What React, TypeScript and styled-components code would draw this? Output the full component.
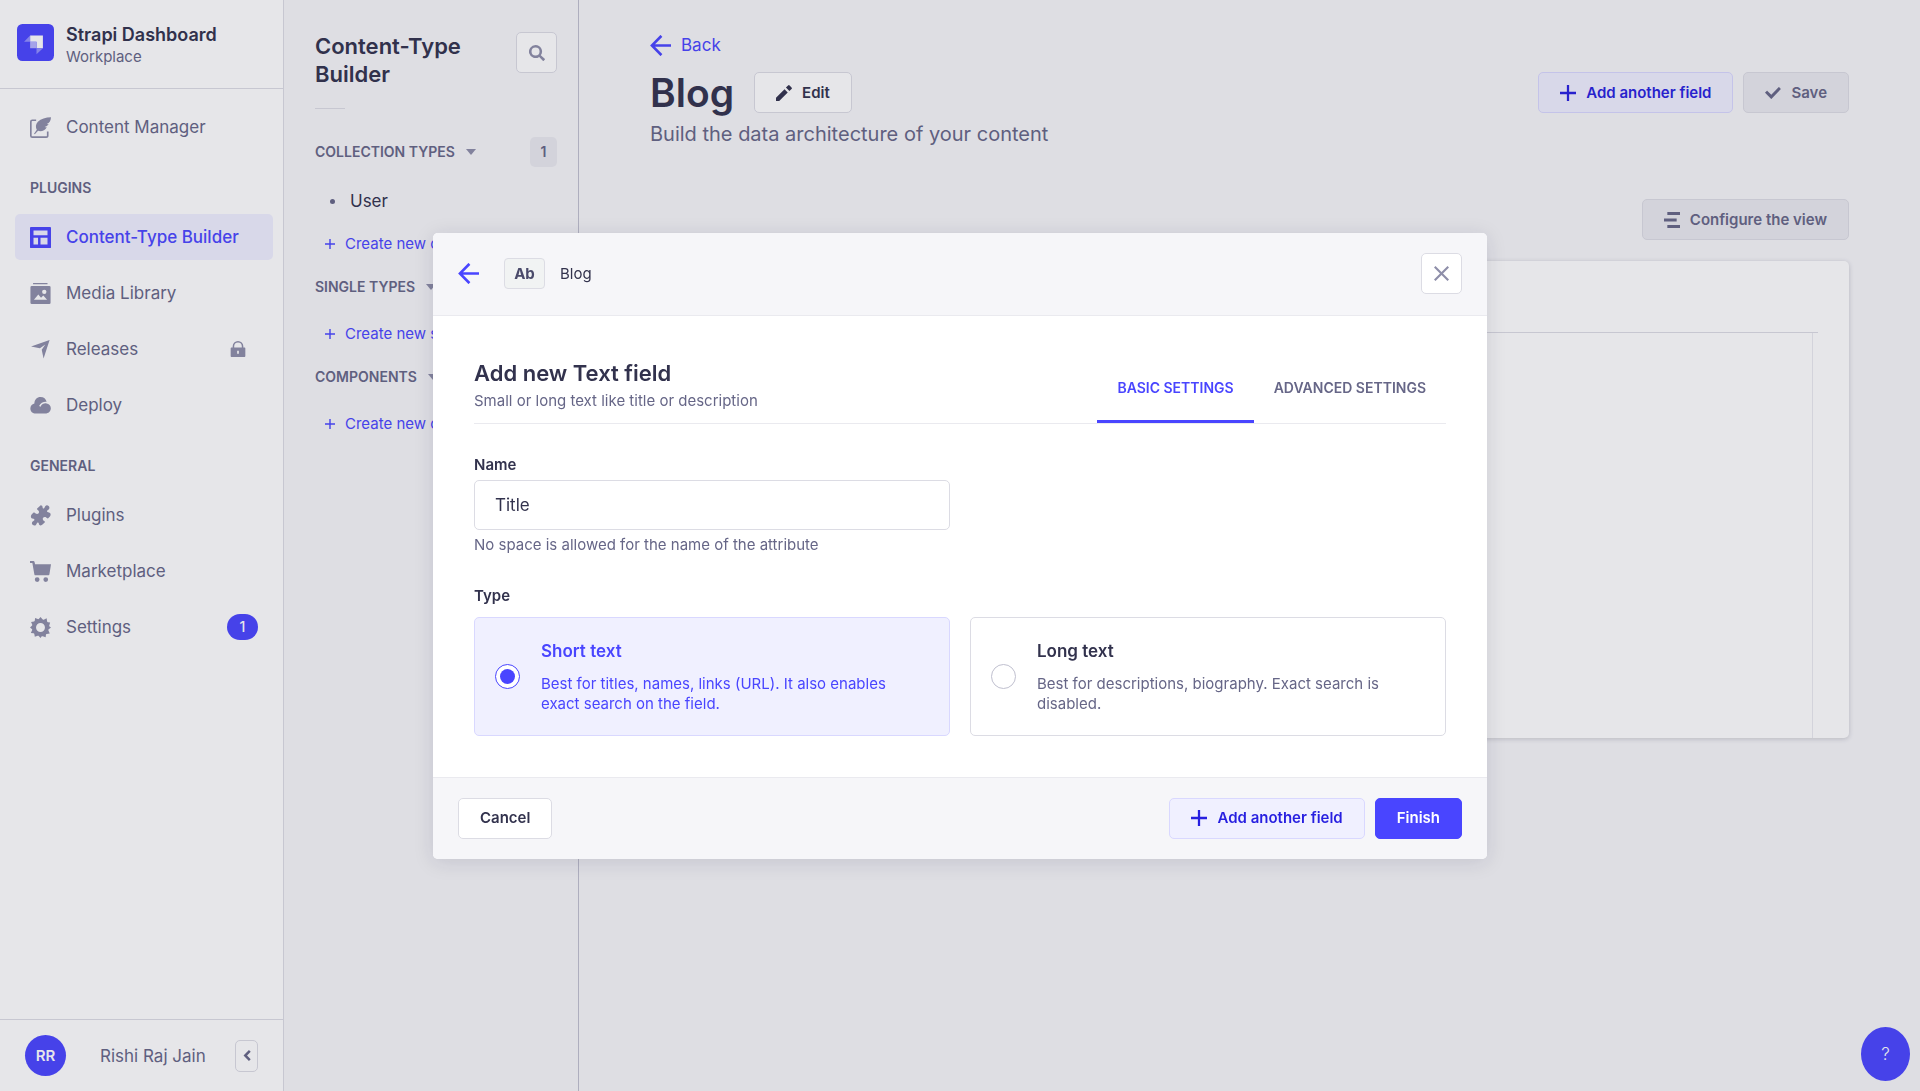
import React, { useState } from 'react';
import styled, { createGlobalStyle, css, ThemeProvider } from 'styled-components';

const theme = {
  n0: '#ffffff',
  n100: '#f6f6f9',
  n150: '#eaeaef',
  n200: '#dcdce4',
  n300: '#c0c0cf',
  n500: '#8e8ea9',
  n600: '#666687',
  n700: '#4a4a6a',
  n800: '#32324d',
  p100: '#f0f0ff',
  p200: '#d9d8ff',
  p600: '#4945ff',
  p700: '#271fe0',
};

const GlobalStyle = createGlobalStyle`
  *, *::before, *::after { box-sizing: border-box; }
  body {
    margin: 0;
    background: ${theme.n100};
    color: ${theme.n800};
    font-family: Inter, "Liberation Sans", sans-serif;
    font-size: 17px;
    line-height: 24px;
    -webkit-font-smoothing: antialiased;
  }
  h1, h2, p, ul, fieldset { margin: 0; padding: 0; border: 0; }
  ul { list-style: none; }
  a { color: inherit; text-decoration: none; }
  button, input { font: inherit; color: inherit; margin: 0; }
  button { cursor: pointer; }
  svg { display: block; flex: none; }
`;

/* ---------- icons ---------- */

type IconProps = { size?: number };
const glyph = (d: string) => ({ size = 16 }: IconProps) => (
  <svg width={size} height={size} viewBox="0 0 24 24" fill="currentColor" fillRule="evenodd" aria-hidden="true">
    <path d={d} />
  </svg>
);

const ArrowLeft = glyph('M24 13.3a.2.2 0 01-.2.2H5.74l8.239 8.239a.2.2 0 010 .282L12.14 23.86a.2.2 0 01-.282 0L.14 12.14a.2.2 0 010-.282L11.86.14a.2.2 0 01.282 0L13.98 1.98a.2.2 0 010 .282L5.74 10.5H23.8c.11 0 .2.09.2.2v2.6z');
const Plus = glyph('M24 13.7H13.700V24h-3.400V13.700H0v-3.400h10.300V0h3.400v10.300H24z');
const Check = glyph('M20.727 2.97a.2.2 0 01.286 0l2.85 2.89a.2.2 0 010 .28L9.554 20.854a.2.2 0 01-.285 0l-9.13-9.243a.2.2 0 010-.281l2.85-2.892a.2.2 0 01.284 0l6.14 6.209L20.726 2.97z');
const Cross = glyph('M24 2.400L21.600 0 12 9.600 2.400 0 0 2.400 9.600 12 0 21.600 2.400 24 12 14.400 21.600 24l2.400-2.400L14.400 12z');
const Pencil = glyph('M0 19.2V24h4.8L17.6 11.2l-4.8-4.8zM23.3 3.6L20.4.7a1.6 1.6 0 00-2.3 0l-3.2 3.2 5.2 5.2 3.2-3.2a1.6 1.6 0 000-2.3z');
const Lines = glyph('M5 0h19v4.4H5zM0 9.8h19v4.4H0zM5 19.6h19V24H5z');
const Search = glyph('M9.8 0a9.8 9.8 0 017.9 15.5l5.9 5.3a1 1 0 010 1.4l-1.5 1.5a1 1 0 01-1.4 0l-5.400-5.800A9.8 9.8 0 119.8 0zm0 3.800a6 6 0 100 12 6 6 0 000-12z');
const Feather = glyph('M24 .2c-6 .1-11.500 1.600-15 5.300C6.200 8.500 6.300 12 7.800 14.700L4.600 19l.9.6 3.700-3.800c3.700 1.200 8-.4 10-4.100-1 .1-1.700 0-2.500-.3 2-.4 3.600-1.500 4.600-3.400-.8.2-1.500.2-2.200 0C22.500 6.500 23.800 4 24 .2zM7 2.800v1.900H2.600c-.4 0-.7.3-.7.7v16c0 .4.3.7.7.7h16c.4 0 .7-.3.7-.7v-4.800h1.900v4.800c0 1.500-1.100 2.600-2.600 2.600h-16A2.600 2.600 0 010 21.400v-16a2.600 2.600 0 012.600-2.600z');
const Layout = glyph('M1 0h22a1 1 0 011 1v22a1 1 0 01-1 1H1a1 1 0 01-1-1V1a1 1 0 011-1zm3 4v5.500h16V4zm0 8.200V20h5.200v-7.800zm8 0V20h8v-7.800z');
const Gallery = glyph('M3.500 0h16.500v1.400H3.500zM2 3.400h20a1.500 1.500 0 011.500 1.500v17.600A1.500 1.500 0 0122 24H2a1.500 1.500 0 01-1.500-1.500V4.900A1.500 1.500 0 012 3.400zm2.500 15.800h15l-4.300-5-2.600 2.600-3.100-3.600zM16.300 7.600a2.500 2.500 0 100 5 2.500 2.500 0 000-5z');
const Plane = glyph('M22.400 1.200L15.500 22.200 13.400 12.300 17.500 6.200 11.300 10.500 1.200 8.600z');
const Cloud = glyph('M12 2.300c3.700 0 6.400 2.300 7 5.500-3.700-.3-7.200 1.400-8.600 4.900l1.700.7c1.300-3 4-4.100 6.700-3.800 2.900.3 5 2.600 5 5.600 0 3.500-2.700 6-6.300 6H6.700C3 21.200.4 18.800.4 15.400c0-2.800 1.800-5 4.600-5.700C5.200 5.100 8 2.300 12 2.300z');
const Puzzle = glyph('M12.200.4c1.400 0 2.300 1.100 2.200 2.500 0 .8.600 1.300 1.400 1 .9-.3.900-1.600 1.600-2.500 1-1.300 2.700-1.300 3.900-.3 1.200 1.100 1.200 2.800 0 3.900-.8.700-1.800 1-1.900 1.900 0 .8.500 1.300 1.300 1.300 1.600 0 2.900 1.100 2.900 2.600 0 1-.4 1.900-1.100 2.600l-1.700 1.700c-.8.800-1.500-.4-2.600-1.100-1.100-.6-2.500-.4-3.200.6-.8 1.200-.4 2.500.7 3.300 1 .7 1.800 1.100 1.100 2l-2.200 2.200c-.8.800-1.500 1.200-2.400 1.200-1.400 0-2.200-1-2.200-2.400 0-.8-.7-1.200-1.400-.9-.9.400-.9 1.700-1.600 2.500-1 1.200-2.700 1.300-3.900.2-1.200-1.100-1.200-2.700-.1-3.900.7-.8 1.900-.9 2-1.800.1-.8-.5-1.300-1.300-1.300-1.500 0-2.700-1.100-2.700-2.600 0-.9.400-1.700 1.100-2.400l2-2c.9-.8 1.500.4 2.500 1.100 1.100.7 2.500.5 3.300-.5.800-1.100.4-2.500-.7-3.300-1-.7-1.700-1.200-1-2z');
const Cart = glyph('M0 0h3.900c.7 0 1.100.4 1.300 1l.6 2.800H24l-1.800 11.400c-.1.700-.7 1.200-1.400 1.200H6.400c-.7 0-1.200-.4-1.400-1.100L2.700 2.200H0zM8.200 18.500a2.700 2.700 0 110 5.400 2.700 2.700 0 010-5.400zm9.800 0a2.700 2.700 0 110 5.400 2.700 2.700 0 010-5.400z');
const Cog = glyph('M12 0l2.300 2.700c.4.500.8.600 1.400.3L19 1.500l.6 3.500c.1.600.4.900 1 .9l2.400.3-1 3.400c-.2.600-.1 1 .4 1.300L24 12l-2.600 2.100c-.5.400-.6.800-.3 1.400l1.500 3.300-3.500.6c-.6.100-.9.400-.9 1l-.3 2.600-3.400-1c-.6-.2-1-.1-1.300.4L12 24l-1.800-2.100c-.4-.5-.8-.6-1.400-.4l-3.300 1.100-.5-3c-.1-.6-.4-.9-1-.9L1 18.400l1.400-3.300c.3-.6.200-1-.3-1.400L0 12l2.100-1.900c.5-.4.6-.8.4-1.400L1.200 5.600 4.600 5c.6-.1.900-.4.9-1l.3-2.800L8.900 2.400c.6.200 1 .1 1.400-.4zm0 6.900a5.100 5.100 0 100 10.200 5.100 5.100 0 000-10.200z');
const Lock = glyph('M12 0a8 8 0 018 8v1.800h1.500c.8 0 1.500.7 1.500 1.500v11.200c0 .8-.7 1.500-1.500 1.500h-19c-.8 0-1.500-.7-1.500-1.500V11.300c0-.8.700-1.500 1.500-1.500H4V8a8 8 0 018-8zm0 2.300A5.700 5.700 0 006.300 8v1.800h11.400V8A5.700 5.700 0 0012 2.300zm-1.300 12.200v4.600h2.600v-4.600z');
const ChevronLeft = glyph('M16.500 2l3.300 3.300L13 12l6.800 6.700-3.300 3.300-10-10z');

const Caret = () => (
  <svg width="10" height="6" viewBox="0 0 10 6" fill="currentColor" aria-hidden="true">
    <path d="M0 0h10L5 6z" />
  </svg>
);

const Logo = () => (
  <svg width="37" height="37" viewBox="0 0 110 110" aria-hidden="true">
    <rect width="110" height="110" rx="16" fill="#4945ff" />
    <path d="M39 34h38v38H58V53H39z" fill="#fff" />
    <path d="M39 53h19v19H39z" fill="#b5b3ff" />
    <path d="M21 53l18-19v19zM58 72h19L58 90z" fill="#918fff" />
  </svg>
);

/* ---------- shared parts ---------- */

const Shell = styled.div`
  display: flex;
  min-height: 100vh;
`;

type Variant = 'default' | 'secondary' | 'tertiary';
const variants = {
  default: css`background: ${theme.p600}; border-color: ${theme.p600}; color: ${theme.n0};`,
  secondary: css`background: ${theme.p100}; border-color: ${theme.p200}; color: ${theme.p700};`,
  tertiary: css`background: ${theme.n0}; border-color: ${theme.n200}; color: ${theme.n800};`,
};

const Button = styled.button<{ $variant?: Variant }>`
  display: inline-flex;
  align-items: center;
  gap: 10px;
  height: 41px;
  padding: 0 21px;
  border: 1px solid;
  border-radius: 5px;
  font-size: 15px;
  font-weight: 600;
  line-height: 20px;
  white-space: nowrap;
  ${({ $variant = 'tertiary' }) => variants[$variant]}
  &:disabled {
    background: ${theme.n150};
    border-color: ${theme.n200};
    color: ${theme.n600};
    cursor: default;
  }
`;

const IconButton = styled.button`
  display: grid;
  place-items: center;
  flex: none;
  width: 41px;
  height: 41px;
  padding: 0;
  border: 1px solid ${theme.n200};
  border-radius: 5px;
  background: ${theme.n0};
  color: ${theme.n500};
`;

/* ---------- main navigation ---------- */

const Sidebar = styled.nav`
  position: sticky;
  top: 0;
  display: flex;
  flex-direction: column;
  flex: none;
  width: 284px;
  height: 100vh;
  background: ${theme.n0};
  border-right: 1px solid ${theme.n200};
`;

const Brand = styled.div`
  display: flex;
  align-items: flex-start;
  gap: 12px;
  height: 89px;
  padding: 24px 17px 0;
  border-bottom: 1px solid ${theme.n200};
`;

const BrandName = styled.p`
  font-size: 18px;
  font-weight: 600;
  line-height: 22px;
`;

const BrandSub = styled.p`
  color: ${theme.n600};
  font-size: 15px;
  line-height: 22px;
`;

const NavScroll = styled.div`
  flex: 1;
  padding: 15px 10px 15px 15px;
  overflow: hidden;
`;

const NavHeading = styled.h2`
  margin: 29px 0 17px 15px;
  color: ${theme.n600};
  font-size: 14px;
  font-weight: 600;
  line-height: 18px;
  text-transform: uppercase;
`;

const NavList = styled.ul`
  display: grid;
  gap: 10px;
`;

const NavLink = styled.a<{ $active?: boolean }>`
  display: flex;
  align-items: center;
  gap: 15px;
  height: 46px;
  padding: 0 15px;
  border-radius: 5px;
  color: ${({ $active }) => ($active ? theme.p600 : theme.n600)};
  background: ${({ $active }) => ($active ? theme.p100 : 'transparent')};
  font-weight: ${({ $active }) => ($active ? 500 : 400)};
  svg { color: ${({ $active }) => ($active ? theme.p600 : theme.n500)}; }
`;

const NavLabel = styled.span`
  flex: 1;
`;

const NavEnd = styled.span`
  display: flex;
  padding-right: 12px;
`;

const Count = styled.span`
  display: grid;
  place-items: center;
  width: 31px;
  height: 26px;
  border-radius: 13px;
  background: ${theme.p600};
  color: ${theme.n0};
  font-size: 14px;
  font-weight: 500;
`;

const UserBar = styled.div`
  display: flex;
  align-items: center;
  height: 72px;
  padding: 0 25px;
  border-top: 1px solid ${theme.n200};
  color: ${theme.n600};
`;

const Avatar = styled.span`
  display: grid;
  place-items: center;
  width: 41px;
  height: 41px;
  margin-right: 34px;
  border-radius: 50%;
  background: ${theme.p600};
  color: ${theme.n0};
  font-size: 15px;
  font-weight: 600;
`;

const Collapse = styled.button`
  display: grid;
  place-items: center;
  width: 23px;
  height: 32px;
  margin-left: auto;
  padding: 0;
  border: 1px solid ${theme.n200};
  border-radius: 5px;
  background: ${theme.n0};
  color: ${theme.n600};
`;

type NavItem = { label: string; Icon: React.FC<IconProps>; active?: boolean; end?: React.ReactNode };

const pluginItems: NavItem[] = [
  { label: 'Content-Type Builder', Icon: Layout, active: true },
  { label: 'Media Library', Icon: Gallery },
  { label: 'Releases', Icon: Plane, end: <Lock size={16} /> },
  { label: 'Deploy', Icon: Cloud },
];
const generalItems: NavItem[] = [
  { label: 'Plugins', Icon: Puzzle },
  { label: 'Marketplace', Icon: Cart },
  { label: 'Settings', Icon: Cog, end: 'count' },
];

const NavGroup = ({ items }: { items: NavItem[] }) => (
  <NavList>
    {items.map(({ label, Icon, active, end }) => (
      <li key={label}>
        <NavLink href="#" $active={active} aria-current={active ? 'page' : undefined}>
          <Icon size={21} />
          <NavLabel>{label}</NavLabel>
          {end === 'count' ? <Count>1</Count> : end && <NavEnd>{end}</NavEnd>}
        </NavLink>
      </li>
    ))}
  </NavList>
);

/* ---------- content-type panel ---------- */

const Panel = styled.aside`
  flex: none;
  width: 295px;
  padding: 32px 21px 0 31px;
  border-right: 1px solid ${theme.n300};
`;

const PanelTop = styled.div`
  display: flex;
  justify-content: space-between;
  align-items: flex-start;
`;

const PanelTitle = styled.h2`
  font-size: 22px;
  font-weight: 600;
  line-height: 28px;
`;

const Rule = styled.div`
  width: 30px;
  height: 1px;
  margin: 20px 0 28px;
  background: ${theme.n200};
`;

const SectionHead = styled.div`
  display: flex;
  align-items: center;
  justify-content: space-between;
  height: 30px;
`;

const SectionToggle = styled.button`
  display: flex;
  align-items: center;
  gap: 11px;
  padding: 0;
  border: 0;
  background: none;
  color: ${theme.n600};
  font-size: 14px;
  font-weight: 600;
  line-height: 18px;
  text-transform: uppercase;
  white-space: nowrap;
  svg { color: ${theme.n500}; }
`;

const Tally = styled.span`
  display: grid;
  place-items: center;
  width: 27px;
  height: 30px;
  border-radius: 5px;
  background: ${theme.n150};
  color: ${theme.n600};
  font-size: 14px;
  font-weight: 600;
`;

const SectionList = styled.ul`
  display: grid;
  gap: 21px;
  padding: 22px 0 18px 10px;
`;

const TypeLink = styled.a`
  display: flex;
  align-items: center;
  gap: 15px;
  padding-left: 5px;
  &::before {
    content: '';
    width: 5px;
    height: 5px;
    border-radius: 50%;
    background: ${theme.n600};
  }
`;

const CreateLink = styled.a`
  display: flex;
  align-items: center;
  gap: 10px;
  color: ${theme.p600};
  font-size: 15px;
  line-height: 20px;
  white-space: nowrap;
`;

const sections = [
  { title: 'Collection Types', count: 1, types: ['User'], create: 'Create new collection type' },
  { title: 'Single Types', types: [], create: 'Create new single type' },
  { title: 'Components', types: [], create: 'Create new component' },
];

/* ---------- main area ---------- */

const Main = styled.main`
  flex: 1;
  min-width: 0;
  padding: 33px 71px 0;
`;

const BackLink = styled.a`
  display: flex;
  align-items: center;
  gap: 10px;
  width: fit-content;
  color: ${theme.p600};
`;

const TitleRow = styled.div`
  display: flex;
  align-items: center;
  justify-content: space-between;
  height: 41px;
  margin: 15px 0 9px;
`;

const Group = styled.div<{ $gap: number }>`
  display: flex;
  align-items: center;
  gap: ${({ $gap }) => $gap}px;
`;

const Title = styled.h1`
  font-size: 39px;
  font-weight: 600;
  line-height: 48px;
`;

const Subtitle = styled.p`
  color: ${theme.n600};
  font-size: 20px;
`;

const Toolbar = styled.div`
  display: flex;
  justify-content: flex-end;
  margin: 53px 0 21px;
`;

const Card = styled.section`
  padding: 71px 31px 0;
  border-radius: 5px;
  background: ${theme.n0};
  box-shadow: 0 1px 5px rgba(33, 33, 52, 0.2);
`;

const FieldTable = styled.div`
  padding-right: 5px;
  border-top: 1px solid ${theme.n200};
`;

const FieldTableBody = styled.div`
  min-height: 405px;
  border-right: 1px solid ${theme.n150};
`;

const Help = styled.button`
  position: fixed;
  right: 10px;
  bottom: 10px;
  width: 49px;
  height: 54px;
  padding: 0;
  border: 0;
  border-radius: 50%;
  background: ${theme.p600};
  color: ${theme.n0};
  font-weight: 300;
`;

/* ---------- dialog ---------- */

const Overlay = styled.div`
  position: fixed;
  inset: 0;
  display: flex;
  align-items: center;
  justify-content: center;
  padding: 20px;
  background: rgba(50, 50, 77, 0.12);
`;

const Dialog = styled.div`
  width: 100%;
  max-width: 1054px;
  border-radius: 5px;
  background: ${theme.n0};
  box-shadow: 0 3px 20px rgba(33, 33, 52, 0.13);
  overflow: hidden;
`;

const DialogHead = styled.header`
  display: flex;
  align-items: center;
  height: 83px;
  padding: 0 25px;
  border-bottom: 1px solid ${theme.n150};
  background: ${theme.n100};
  font-size: 15px;
`;

const DialogBack = styled.a`
  margin-right: 25px;
  color: ${theme.p600};
`;

const TypeBadge = styled.span`
  display: grid;
  place-items: center;
  width: 41px;
  height: 31px;
  margin-right: 15px;
  border: 1px solid ${theme.n200};
  border-radius: 4px;
  background: #f1f3f3;
  color: ${theme.n700};
  font-weight: 700;
`;

const Crumb = styled.span`
  flex: 1;
`;

const DialogBody = styled.div`
  padding: 41px;
`;

const FormHead = styled.div`
  display: flex;
  justify-content: space-between;
  height: 67px;
  border-bottom: 1px solid ${theme.n150};
`;

const FormTitle = styled.h2`
  margin: 2px 0 4px;
  font-size: 22px;
  font-weight: 600;
  line-height: 28px;
`;

const Hint = styled.p`
  color: ${theme.n600};
  font-size: 15px;
  line-height: 20px;
`;

const Tabs = styled.div`
  display: flex;
`;

const Tab = styled.button`
  padding: 0 20px;
  border: 0;
  border-bottom: 3px solid transparent;
  background: none;
  color: ${theme.n600};
  font-size: 14px;
  font-weight: 600;
  line-height: 18px;
  text-transform: uppercase;
  &[aria-selected='true'] {
    border-color: ${theme.p600};
    color: ${theme.p600};
  }
`;

const TwoColumns = styled.div`
  display: grid;
  grid-template-columns: 1fr 1fr;
  gap: 20px;
`;

const Field = styled.div`
  display: grid;
  gap: 5px;
  margin: 31px 0;
`;

const labelText = css`
  padding: 0;
  font-size: 15px;
  font-weight: 600;
  line-height: 20px;
`;
const Label = styled.label`${labelText}`;
const Legend = styled.legend`
  ${labelText}
  margin-bottom: 11px;
`;

const TextInput = styled.input`
  width: 100%;
  height: 50px;
  padding: 0 20px;
  border: 1px solid ${theme.n200};
  border-radius: 5px;
  background: ${theme.n0};
  outline: none;
`;

const Option = styled.label`
  display: flex;
  align-items: center;
  gap: 21px;
  padding: 21px 41px 21px 20px;
  border: 1px solid ${theme.n200};
  border-radius: 5px;
  cursor: pointer;
  &:has(input:checked) {
    background: ${theme.p100};
    border-color: ${theme.p200};
    * { color: ${theme.p600}; }
  }
`;

const Radio = styled.input`
  display: grid;
  place-items: center;
  flex: none;
  appearance: none;
  width: 25px;
  height: 25px;
  border: 1px solid ${theme.n300};
  border-radius: 50%;
  background: ${theme.n0};
  &:checked { border-color: ${theme.p600}; }
  &:checked::after {
    content: '';
    width: 15px;
    height: 15px;
    border-radius: 50%;
    background: ${theme.p600};
  }
`;

const OptionText = styled.span`
  display: grid;
  gap: 11px;
`;

const OptionTitle = styled.span`
  font-size: 17px;
  font-weight: 600;
`;

const DialogFoot = styled.footer`
  display: flex;
  align-items: center;
  justify-content: space-between;
  height: 82px;
  padding: 0 25px;
  border-top: 1px solid ${theme.n150};
  background: ${theme.n100};
`;

const textTypes = [
  { id: 'short', title: 'Short text', text: 'Best for titles, names, links (URL). It also enables exact search on the field.' },
  { id: 'long', title: 'Long text', text: 'Best for descriptions, biography. Exact search is disabled.' },
];

const tabs = ['Basic settings', 'Advanced settings'];

const FieldDialog = () => {
  const [tab, setTab] = useState(tabs[0]);
  const [name, setName] = useState('Title');
  const [type, setType] = useState('short');
  return (
    <Overlay>
      <Dialog role="dialog" aria-modal="true" aria-labelledby="field-title">
        <DialogHead>
          <DialogBack href="#" aria-label="Back"><ArrowLeft size={21} /></DialogBack>
          <TypeBadge>Ab</TypeBadge>
          <Crumb>Blog</Crumb>
          <IconButton aria-label="Close"><Cross size={15} /></IconButton>
        </DialogHead>
        <DialogBody>
          <FormHead>
            <div>
              <FormTitle id="field-title">Add new Text field</FormTitle>
              <Hint>Small or long text like title or description</Hint>
            </div>
            <Tabs role="tablist">
              {tabs.map((t) => (
                <Tab key={t} role="tab" aria-selected={t === tab} onClick={() => setTab(t)}>{t}</Tab>
              ))}
            </Tabs>
          </FormHead>
          <TwoColumns>
            <Field>
              <Label htmlFor="name">Name</Label>
              <TextInput id="name" value={name} onChange={(e) => setName(e.target.value)} aria-describedby="name-hint" />
              <Hint id="name-hint">No space is allowed for the name of the attribute</Hint>
            </Field>
          </TwoColumns>
          <fieldset>
            <Legend>Type</Legend>
            <TwoColumns>
              {textTypes.map(({ id, title, text }) => (
                <Option key={id} htmlFor={id}>
                  <Radio type="radio" id={id} name="type" checked={type === id} onChange={() => setType(id)} />
                  <OptionText>
                    <OptionTitle>{title}</OptionTitle>
                    <Hint as="span">{text}</Hint>
                  </OptionText>
                </Option>
              ))}
            </TwoColumns>
          </fieldset>
        </DialogBody>
        <DialogFoot>
          <Button>Cancel</Button>
          <Group $gap={10}>
            <Button $variant="secondary"><Plus size={16} />Add another field</Button>
            <Button $variant="default">Finish</Button>
          </Group>
        </DialogFoot>
      </Dialog>
    </Overlay>
  );
};

export default function App() {
  return (
    <ThemeProvider theme={theme}>
      <GlobalStyle />
      <Shell>
        <Sidebar aria-label="Main">
          <Brand>
            <Logo />
            <div>
              <BrandName>Strapi Dashboard</BrandName>
              <BrandSub>Workplace</BrandSub>
            </div>
          </Brand>
          <NavScroll>
            <NavGroup items={[{ label: 'Content Manager', Icon: Feather }]} />
            <NavHeading>Plugins</NavHeading>
            <NavGroup items={pluginItems} />
            <NavHeading>General</NavHeading>
            <NavGroup items={generalItems} />
          </NavScroll>
          <UserBar>
            <Avatar>RR</Avatar>
            Rishi Raj Jain
            <Collapse aria-label="Collapse the navbar"><ChevronLeft size={13} /></Collapse>
          </UserBar>
        </Sidebar>
        <Panel>
          <PanelTop>
            <PanelTitle>Content-Type<br />Builder</PanelTitle>
            <IconButton aria-label="Search"><Search size={16} /></IconButton>
          </PanelTop>
          <Rule />
          {sections.map(({ title, count, types, create }) => (
            <section key={title}>
              <SectionHead>
                <SectionToggle aria-expanded="true">{title}<Caret /></SectionToggle>
                {count && <Tally>{count}</Tally>}
              </SectionHead>
              <SectionList>
                {types.map((t) => (
                  <li key={t}><TypeLink href="#">{t}</TypeLink></li>
                ))}
                <li><CreateLink href="#"><Plus size={10} />{create}</CreateLink></li>
              </SectionList>
            </section>
          ))}
        </Panel>
        <Main>
          <BackLink href="#"><ArrowLeft size={21} />Back</BackLink>
          <TitleRow>
            <Group $gap={20}>
              <Title>Blog</Title>
              <Button><Pencil size={16} />Edit</Button>
            </Group>
            <Group $gap={10}>
              <Button $variant="secondary"><Plus size={16} />Add another field</Button>
              <Button disabled><Check size={16} />Save</Button>
            </Group>
          </TitleRow>
          <Subtitle>Build the data architecture of your content</Subtitle>
          <Toolbar>
            <Button disabled><Lines size={16} />Configure the view</Button>
          </Toolbar>
          <Card>
            <FieldTable>
              <FieldTableBody />
            </FieldTable>
          </Card>
        </Main>
      </Shell>
      <Help aria-label="Help">?</Help>
      <FieldDialog />
    </ThemeProvider>
  );
}
